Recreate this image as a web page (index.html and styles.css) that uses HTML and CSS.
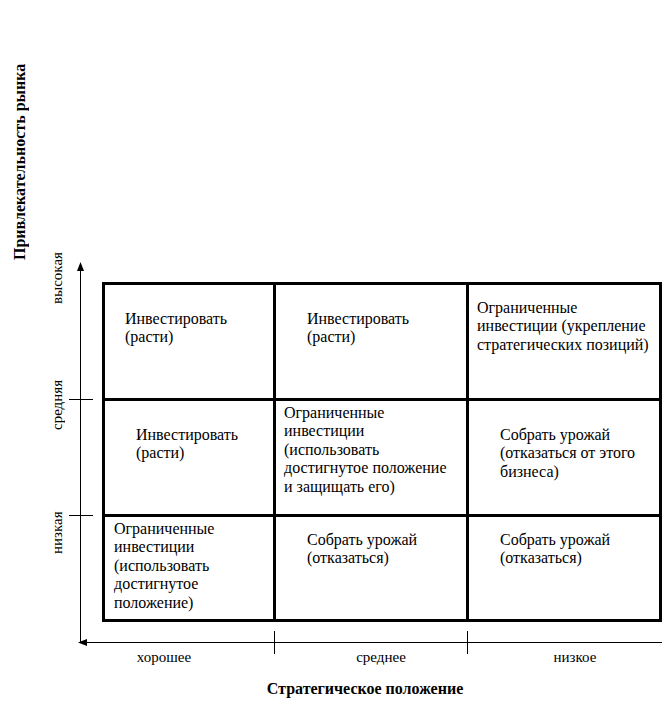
FILE: index.html
```html
<!DOCTYPE html>
<html lang="ru">
<head>
<meta charset="utf-8">
<title>Матрица</title>
<link rel="stylesheet" href="styles.css">
</head>
<body>
<div class="page">
  <div class="y-title">Привлекательность рынка</div>
  <div class="y-label y-high">высокая</div>
  <div class="y-label y-mid">средняя</div>
  <div class="y-label y-low">низкая</div>

  <svg class="axes" width="662" height="707" viewBox="0 0 662 707">
    <line x1="80.5" y1="268" x2="80.5" y2="643" stroke="#000" stroke-width="1"/>
    <polygon points="80.5,262 77,271 84,271" fill="#000"/>
    <line x1="86" y1="642.5" x2="662" y2="642.5" stroke="#000" stroke-width="1"/>
    <polygon points="78,642.5 87,639 87,646" fill="#000"/>
    <line x1="69" y1="399.5" x2="93" y2="399.5" stroke="#000" stroke-width="1"/>
    <line x1="69" y1="515.5" x2="93" y2="515.5" stroke="#000" stroke-width="1"/>
    <line x1="274.5" y1="631" x2="274.5" y2="654" stroke="#000" stroke-width="1"/>
    <line x1="467.5" y1="631" x2="467.5" y2="654" stroke="#000" stroke-width="1"/>
  </svg>

  <div class="matrix">
    <div class="cell p-mid-l">Инвестировать<br>(расти)</div>
    <div class="cell p-mid-r">Инвестировать<br>(расти)</div>
    <div class="cell p-top2">Ограниченные<br>инвестиции (укрепление<br>стратегических позиций)</div>
    <div class="cell p-mid-r">Инвестировать<br>(расти)</div>
    <div class="cell p-top">Ограниченные<br>инвестиции<br>(использовать<br>достигнутое положение<br>и защищать его)</div>
    <div class="cell p-mid-r">Собрать урожай<br>(отказаться от этого<br>бизнеса)</div>
    <div class="cell p-top p-l9">Ограниченные<br>инвестиции<br>(использовать<br>достигнутое<br>положение)</div>
    <div class="cell p-sec">Собрать урожай<br>(отказаться)</div>
    <div class="cell p-sec">Собрать урожай<br>(отказаться)</div>
  </div>

  <div class="x-labels">
    <span class="x-label x-good">хорошее</span>
    <span class="x-label x-mid">среднее</span>
    <span class="x-label x-low">низкое</span>
  </div>
  <div class="x-title">Стратегическое положение</div>
</div>
</body>
</html>
```

FILE: styles.css
```css
html, body {
  margin: 0;
  padding: 0;
  background: #fff;
}

.page {
  position: relative;
  width: 662px;
  height: 707px;
  overflow: hidden;
  font-family: "Liberation Serif", "Times New Roman", serif;
  color: #000;
}

.axes {
  position: absolute;
  left: 0;
  top: 0;
  pointer-events: none;
}

.matrix {
  margin: 282px 0 0 102px;
  width: 560px;
  display: grid;
  grid-template-columns: 168px 190px 190px;
  grid-template-rows: 113px 113px 102px;
  gap: 3px;
  padding: 3px;
  background: #000;
  box-sizing: border-box;
}

.cell {
  background: #fff;
  font-size: 16px;
  line-height: 18.4px;
  white-space: nowrap;
  box-sizing: border-box;
}

.p-mid-l { padding: 25px 0 0 20px; }
.p-mid-r { padding: 25px 0 0 31px; }
.p-top2 { padding: 14px 0 0 8px; }
.p-top { padding: 3px 0 0 8px; }
.p-l9 { padding-left: 9px; }
.p-sec { padding: 14px 0 0 31px; }

.x-labels {
  display: grid;
  grid-template-columns: 168px 266px 122px;
  margin: 27px 0 0 80px;
  font-size: 15px;
  line-height: 17px;
}

.x-label {
  text-align: center;
}

.x-title {
  margin: 14px 0 0 0;
  width: 730px;
  text-align: center;
  font-weight: bold;
  font-size: 16px;
  line-height: 18px;
}

.y-title,
.y-label {
  position: absolute;
  writing-mode: vertical-rl;
  transform: rotate(180deg);
  white-space: nowrap;
}

.y-title {
  left: 11px;
  top: 62px;
  height: 200px;
  text-align: center;
  font-weight: bold;
  font-size: 16px;
  line-height: 18px;
}

.y-label {
  left: 49px;
  font-size: 15px;
  line-height: 17px;
  text-align: center;
}

.y-high { top: 250px; height: 56px; }
.y-mid { top: 378px; height: 54px; }
.y-low { top: 508px; height: 50px; }
```
